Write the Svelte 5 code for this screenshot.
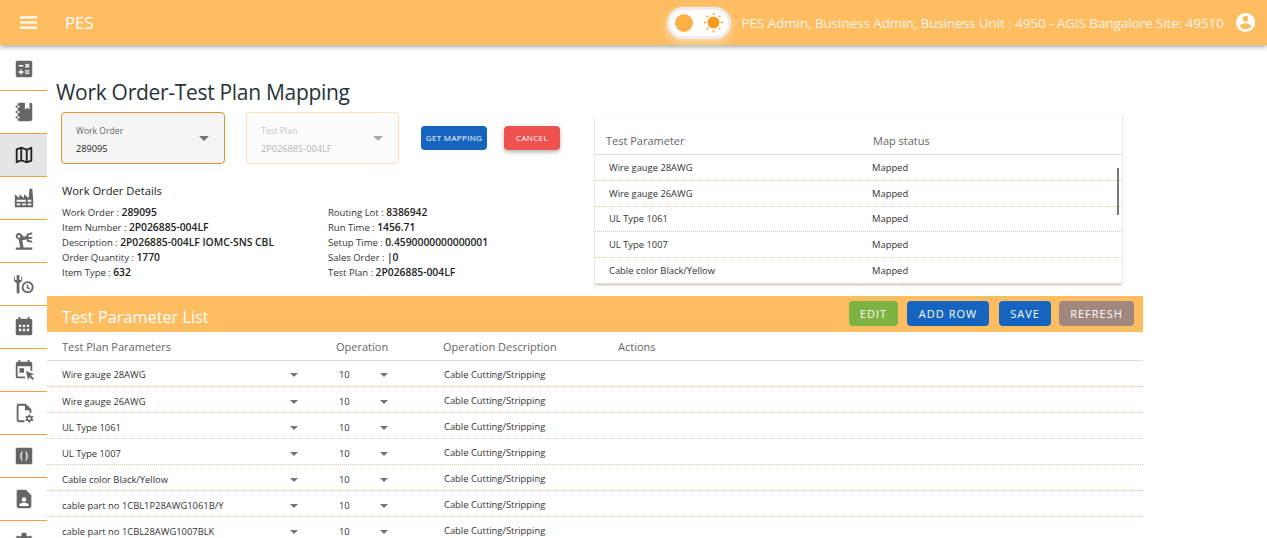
<script>
	const icons = [
		{ d: 'M19,3H5C3.9,3 3,3.9 3,5V19C3,20.1 3.9,21 5,21H19C20.1,21 21,20.1 21,19V5C21,3.9 20.1,3 19,3M13.03,7.06L14.09,6L15.5,7.41L16.91,6L17.97,7.06L16.56,8.47L17.97,9.88L16.91,10.94L15.5,9.54L14.09,10.95L13.03,9.89L14.44,8.47L13.03,7.06M6.25,7.72H11.25V9.22H6.25V7.72M11.5,16H9.5V18H8V16H6V14.5H8V12.5H9.5V14.5H11.5V16M18,17.25H13V15.75H18V17.25M18,14.75H13V13.25H18V14.75Z' },
		{ d: 'M3 7V5H5V4C5 2.89 5.9 2 7 2H13V9L15.5 7.5L18 9V2H19C20.05 2 21 2.95 21 4V20C21 21.05 20.05 22 19 22H7C5.95 22 5 21.05 5 20V19H3V17H5V13H3V11H5V7H3M5 5V7H7V5H5M5 19H7V17H5V19M5 13H7V11H5V13Z' },
		{ d: 'M20.5,3L20.34,3.03L15,5.1L9,3L3.36,4.9C3.15,4.97 3,5.15 3,5.38V20.5A0.5,0.5 0 0,0 3.5,21L3.66,20.97L9,18.9L15,21L20.64,19.1C20.85,19.03 21,18.85 21,18.62V3.5A0.5,0.5 0 0,0 20.5,3M10,5.47L14,6.87V18.53L10,17.13V5.47M5,6.46L8,5.45V17.15L5,18.31V6.46M19,17.54L16,18.55V6.86L19,5.7V17.54Z', active: true },
		{ d: 'M4,18V20H8V18H4M4,14V16H14V14H4M10,18V20H14V18H10M16,14V16H20V14H16M16,18V20H20V18H16M2,22V8L7,12V8L12,12V8L17,12L18,2H21L22,12V22H2Z' },
		{ d: 'M3 19H21V21.5H3ZM8 19L6 10.2A3.5 3.5 0 1 1 9.2 4.6L12 7.5L15 6V4L21 2.5V4.5L17 5.5V7.5H21V9.5H17V11L21 12V14L15 12.5V10L11 11.2L10 10.5L11.5 19ZM6.5 5.5A1.5 1.5 0 1 0 6.5 8.5A1.5 1.5 0 1 0 6.5 5.5Z' },
		{ d: 'M2 3.2A5 5 0 0 0 4 11V22H7V11A5 5 0 0 0 9 3.2V7.5H7V2.5A5 5 0 0 0 4 2.5V7.5H2ZM16 9A6.5 6.5 0 1 0 16 22A6.5 6.5 0 1 0 16 9M16 11A4.5 4.5 0 1 1 16 20A4.5 4.5 0 1 1 16 11M15 12.5V16.3L18 18L18.8 16.7L16.5 15.4V12.5Z' },
		{ d: 'M19,3H18V1H16V3H8V1H6V3H5A2,2 0 0,0 3,5V19A2,2 0 0,0 5,21H19A2,2 0 0,0 21,19V5A2,2 0 0,0 19,3M6.5,9.5H9V12H6.5ZM10.75,9.5H13.25V12H10.75ZM15,9.5H17.5V12H15ZM6.5,14H9V16.5H6.5ZM10.75,14H13.25V16.5H10.75ZM15,14H17.5V16.5H15Z' },
		{ d: 'M19 3H18V1H16V3H8V1H6V3H5A2 2 0 0 0 3 5V19A2 2 0 0 0 5 21H13.5L12.7 19H5V8H19V12.5L21 13.3V5A2 2 0 0 0 19 3M7 10H12V15H7ZM14 13L23 16.5L19.5 18L23 21.5L21.5 23L18 19.5L16.5 23Z' },
		{ d: 'M6 2A2 2 0 0 0 4 4V20A2 2 0 0 0 6 22H12.5V20H6V4H13V9H18V12H20V8L14 2ZM17 13.5L18.6 13.5L18.9 15A4 4 0 0 1 20 15.6L21.4 15L22.2 16.4L21 17.4A4 4 0 0 1 21 18.6L22.2 19.6L21.4 21L20 20.4A4 4 0 0 1 18.9 21L18.6 22.5H17L16.7 21A4 4 0 0 1 15.6 20.4L14.2 21L13.4 19.6L14.6 18.6A4 4 0 0 1 14.6 17.4L13.4 16.4L14.2 15L15.6 15.6A4 4 0 0 1 16.7 15ZM17.8 16.5A1.5 1.5 0 1 0 17.8 19.5A1.5 1.5 0 1 0 17.8 16.5Z' },
		{ d: 'M5 3H19A2 2 0 0 1 21 5V19A2 2 0 0 1 19 21H5A2 2 0 0 1 3 19V5A2 2 0 0 1 5 3M9.5 7C7.5 9.5 7.5 14.5 9.5 17H10.6C9 14.5 9 9.5 10.6 7ZM13.4 7C15 9.5 15 14.5 13.4 17H14.5C16.5 14.5 16.5 9.5 14.5 7Z' },
		{ d: 'M6 2A2 2 0 0 0 4 4V20A2 2 0 0 0 6 22H18A2 2 0 0 0 20 20V8L14 2ZM12 10A2.5 2.5 0 1 1 12 15A2.5 2.5 0 1 1 12 10M7 19.5V18C7 16.5 10 16 12 16C14 16 17 16.5 17 18V19.5Z' },
		{ d: 'M12,8A4,4 0 0,1 16,12A4,4 0 0,1 12,16A4,4 0 0,1 8,12A4,4 0 0,1 12,8M12,10A2,2 0 0,0 10,12A2,2 0 0,0 12,14A2,2 0 0,0 14,12A2,2 0 0,0 12,10M10,22C9.75,22 9.54,21.82 9.5,21.58L9.13,18.93C8.5,18.68 7.96,18.34 7.44,17.94L4.95,18.95C4.73,19.03 4.46,18.95 4.34,18.73L2.34,15.27C2.21,15.05 2.27,14.78 2.46,14.63L4.57,12.97L4.5,12L4.57,11L2.46,9.37C2.27,9.22 2.21,8.95 2.34,8.73L4.34,5.27C4.46,5.05 4.73,4.96 4.95,5.05L7.44,6.05C7.96,5.66 8.5,5.32 9.13,5.07L9.5,2.42C9.54,2.18 9.75,2 10,2H14C14.25,2 14.46,2.18 14.5,2.42L14.87,5.07C15.5,5.32 16.04,5.66 16.56,6.05L19.05,5.05C19.27,4.96 19.54,5.05 19.66,5.27L21.66,8.73C21.79,8.95 21.73,9.22 21.54,9.37L19.43,11L19.5,12L19.43,13L21.54,14.63C21.73,14.78 21.79,15.05 21.66,15.27L19.66,18.73C19.54,18.95 19.27,19.04 19.05,18.95L16.56,17.95C16.04,18.34 15.5,18.68 14.87,18.93L14.5,21.58C14.46,21.82 14.25,22 14,22H10Z' }
	];

	const detailsLeft = [
		['Work Order', '289095'],
		['Item Number', '2P026885-004LF'],
		['Description', '2P026885-004LF IOMC-SNS CBL'],
		['Order Quantity', '1770'],
		['Item Type', '632']
	];
	const detailsRight = [
		['Routing Lot', '8386942'],
		['Run Time', '1456.71'],
		['Setup Time', '0.4590000000000001'],
		['Sales Order', '|0'],
		['Test Plan', '2P026885-004LF']
	];
	const mapped = ['Wire gauge 28AWG', 'Wire gauge 26AWG', 'UL Type 1061', 'UL Type 1007', 'Cable color Black/Yellow'];
	const params = [...mapped, 'cable part no 1CBL1P28AWG1061B/Y', 'cable part no 1CBL28AWG1007BLK'];
</script>

<div class="page">
	<header>
		<svg class="menu" viewBox="0 0 18 13" width="17" height="13"><path d="M0 0H18V2.2H0ZM0 5.4H18V7.6H0ZM0 10.8H18V13H0Z" /></svg>
		<span class="brand">PES</span>
		<div class="toggle">
			<span class="knob"></span>
			<svg viewBox="0 0 24 24" width="21" height="21" class="sun">
				<circle cx="12" cy="12" r="6" />
				<path d="M12 1V3.5M12 20.5V23M1 12H3.5M20.5 12H23M4.2 4.2L5.8 5.8M18.2 18.2L19.8 19.8M19.8 4.2L18.2 5.8M5.8 18.2L4.2 19.8" />
			</svg>
		</div>
		<span class="user">PES Admin, Business Admin, Business Unit : 4950 - AGIS Bangalore Site: 49510</span>
		<svg class="account" viewBox="0 0 24 24" width="23" height="23"><path d="M12,19.2C9.5,19.2 7.29,17.92 6,16C6.03,14 10,12.9 12,12.9C14,12.9 17.97,14 18,16C16.71,17.92 14.5,19.2 12,19.2M12,5A3,3 0 0,1 15,8A3,3 0 0,1 12,11A3,3 0 0,1 9,8A3,3 0 0,1 12,5M12,2A10,10 0 0,0 2,12A10,10 0 0,0 12,22A10,10 0 0,0 22,12A10,10 0 0,0 12,2Z" /></svg>
	</header>

	<div class="body">
		<nav>
			{#each icons as icon}
				<div class="nav-item" class:active={icon.active}>
					<svg viewBox="0 0 24 24" width="22" height="22"><path fill-rule="evenodd" d={icon.d} /></svg>
				</div>
			{/each}
		</nav>

		<main>
			<h1>Work Order-Test Plan Mapping</h1>
			<div class="top">
				<div class="left">
					<div class="filters">
						<div class="select">
							<label>Work Order</label>
							<span class="value">289095</span>
							<i class="arrow"></i>
						</div>
						<div class="select disabled">
							<label>Test Plan</label>
							<span class="value">2P026885-004LF</span>
							<i class="arrow"></i>
						</div>
						<button class="small blue">GET MAPPING</button>
						<button class="small red">CANCEL</button>
					</div>
					<h2>Work Order Details</h2>
					<div class="details">
						<div>
							{#each detailsLeft as [k, v]}
								<p>{k} : <b>{v}</b></p>
							{/each}
						</div>
						<div>
							{#each detailsRight as [k, v]}
								<p>{k} : <b>{v}</b></p>
							{/each}
						</div>
					</div>
				</div>

				<div class="card">
					<div class="card-head">
						<span>Test Parameter</span>
						<span>Map status</span>
					</div>
					{#each mapped as name}
						<div class="card-row">
							<span>{name}</span>
							<span>Mapped</span>
						</div>
					{/each}
					<div class="thumb"></div>
				</div>
			</div>

			<section>
				<div class="bar">
					<span class="bar-title">Test Parameter List</span>
					<div class="actions">
						<button class="green">EDIT</button>
						<button class="blue addrow">ADD ROW</button>
						<button class="blue save">SAVE</button>
						<button class="brown">REFRESH</button>
					</div>
				</div>
				<div class="thead">
					<span class="c1">Test Plan Parameters</span>
					<span class="c2">Operation</span>
					<span class="c3">Operation Description</span>
					<span>Actions</span>
				</div>
				{#each params as name}
					<div class="trow">
						<span class="c1 sel">{name}<i class="arrow"></i></span>
						<span class="c2 sel op">10<i class="arrow"></i></span>
						<span class="c3 desc">Cable Cutting/Stripping</span>
					</div>
				{/each}
			</section>
		</main>
	</div>
</div>

<style>
	:global(body) {
		margin: 0;
		background: #fff;
	}
	.page {
		width: 1267px;
		height: 538px;
		overflow: hidden;
		font-family: 'Open Sans', 'Noto Sans', sans-serif;
		color: #212121;
	}
	header {
		position: relative;
		z-index: 2;
		display: flex;
		align-items: center;
		height: 45px;
		background: #ffbd62;
		box-shadow: 0 2px 5px rgba(0, 0, 0, 0.35);
		color: #fff;
	}
	header svg {
		fill: #fff;
	}
	.menu {
		margin-left: 20px;
	}
	.brand {
		margin-left: 28px;
		font-size: 17px;
		letter-spacing: -0.2px;
	}
	.toggle {
		display: flex;
		align-items: center;
		justify-content: space-between;
		box-sizing: border-box;
		flex: none;
		width: 58px;
		height: 26px;
		margin-left: 577px;
		padding: 0 4px 0 5px;
		background: #fff;
		border-radius: 13px;
		box-shadow: 0 0 0 3px rgba(235, 240, 250, 0.9), 0 3px 9px 3px rgba(255, 255, 255, 0.5);
	}
	.knob {
		width: 18px;
		height: 18px;
		border-radius: 50%;
		background: #fdb147;
	}
	header svg.sun {
		fill: #f59a1d;
		stroke: #f59a1d;
		stroke-width: 1.6;
	}
	.user {
		margin-left: 13px;
		font-size: 13.5px;
		letter-spacing: -0.09px;
		white-space: nowrap;
		opacity: 0.85;
	}
	.account {
		margin-left: auto;
		margin-right: 10px;
	}
	.body {
		display: flex;
	}
	nav {
		flex: none;
		width: 47px;
		padding-top: 3px;
	}
	.nav-item {
		display: flex;
		align-items: center;
		justify-content: center;
		box-sizing: border-box;
		height: 43px;
		border-bottom: 1px solid #e8a33d;
	}
	.nav-item svg {
		fill: #666;
	}
	.nav-item.active {
		background: #e5e5e5;
	}
	.nav-item.active svg {
		fill: #212121;
	}
	main {
		flex: none;
		width: 1096px;
	}
	h1 {
		margin: 0;
		padding: 31px 0 0 9px;
		height: 36px;
		line-height: 32px;
		font-size: 21px;
		letter-spacing: -0.3px;
		font-weight: 400;
		color: #263238;
		white-space: nowrap;
	}
	.top {
		display: flex;
		height: 184px;
	}
	.left {
		width: 548px;
	}
	.filters {
		display: flex;
		align-items: flex-start;
		padding-left: 14px;
	}
	.select {
		position: relative;
		display: flex;
		flex-direction: column;
		box-sizing: border-box;
		width: 164px;
		height: 52px;
		padding: 11px 14px 0;
		background: #f5f5f5;
		border: 1px solid #d9962c;
		border-radius: 4px;
	}
	.select label {
		font-size: 8.6px;
		line-height: 14px;
		color: #666;
	}
	.select .value {
		margin-top: 4px;
		font-size: 9.2px;
		line-height: 14px;
	}
	.select .arrow {
		position: absolute;
		top: 23px;
		right: 15px;
		border-top-color: #757575;
	}
	.select.disabled {
		width: 153px;
		margin-left: 21px;
		background: #fcfcfc;
		border-color: #f6e0bd;
		color: #b5b5b5;
	}
	.select.disabled label {
		color: #c4c4c4;
	}
	.select.disabled .arrow {
		border-top-color: #a8a8a8;
		right: 15px;
	}
	.arrow {
		display: inline-block;
		width: 0;
		height: 0;
		border-left: 5px solid transparent;
		border-right: 5px solid transparent;
		border-top: 5px solid #757575;
	}
	button {
		border: none;
		border-radius: 4px;
		color: #fff;
		font-family: inherit;
		font-size: 11px;
		letter-spacing: 1px;
		padding: 0;
		height: 25px;
	}
	button.small {
		margin-top: 14px;
		height: 24px;
		padding-bottom: 1px;
		font-size: 8px;
		letter-spacing: 0.35px;
	}
	button.small.blue {
		width: 66px;
		margin-left: 22px;
	}
	button.small.red {
		width: 56px;
		margin-left: 17px;
		background: #ef5350;
		box-shadow: 0 2px 4px rgba(0, 0, 0, 0.3);
	}
	.blue {
		background: #1565c0;
	}
	.green {
		background: #7cb342;
		width: 49px;
	}
	.brown {
		background: #a1887f;
		width: 75px;
	}
	h2 {
		margin: 19px 0 0 15px;
		font-size: 11.2px;
		line-height: 16px;
		font-weight: 400;
	}
	.details {
		display: flex;
		margin: 6px 0 0 15px;
	}
	.details > div {
		width: 266px;
	}
	.details p {
		margin: 0;
		font-size: 9.5px;
		line-height: 15px;
		white-space: nowrap;
		color: #333;
	}
	.details b {
		font-size: 10.3px;
		font-weight: 600;
		color: #212121;
	}
	.card {
		position: relative;
		box-sizing: border-box;
		width: 527px;
		height: 169px;
		margin-top: 3px;
		box-shadow: 0 1px 2px rgba(0, 0, 0, 0.28);
		overflow: hidden;
	}
	.card-head {
		display: flex;
		align-items: flex-end;
		height: 40px;
		padding: 0 0 5px 11px;
		box-sizing: border-box;
		border-bottom: 1px solid #ddd;
		font-size: 11px;
		line-height: 16px;
		color: #666;
	}
	.card-head span:first-child {
		width: 267px;
	}
	.card-row {
		display: flex;
		align-items: center;
		box-sizing: border-box;
		height: 25.8px;
		padding-left: 14px;
		border-bottom: 1px dotted #dccaa6;
		font-size: 9.4px;
		color: #333;
	}
	.card-row span:first-child {
		width: 263px;
	}
	.thumb {
		position: absolute;
		top: 53px;
		right: 3px;
		width: 2px;
		height: 47px;
		background: #777;
	}
	.bar {
		display: flex;
		align-items: center;
		justify-content: space-between;
		height: 36px;
		padding: 0 9px 0 15px;
		background: #ffbd62;
		color: #fff;
	}
	.bar-title {
		font-size: 16.3px;
		padding-top: 6px;
	}
	.actions {
		display: flex;
		gap: 9px;
		margin-top: -1px;
	}
	.addrow {
		width: 82px;
	}
	.save {
		width: 52px;
		margin-left: 1px;
		margin-right: -1px;
	}
	.thead {
		display: flex;
		align-items: center;
		height: 29px;
		box-sizing: border-box;
		border-bottom: 1px solid #ddd;
		font-size: 11px;
		color: #666;
	}
	.trow {
		display: flex;
		align-items: center;
		box-sizing: border-box;
		height: 26px;
		padding-top: 2px;
		border-bottom: 1px dotted #dccaa6;
		font-size: 9.4px;
		color: #333;
	}
	.c1 {
		box-sizing: border-box;
		width: 289px;
		padding-left: 15px;
	}
	.c2 {
		box-sizing: border-box;
		width: 107px;
	}
	.c3 {
		width: 175px;
	}
	.sel {
		display: flex;
		justify-content: space-between;
		align-items: center;
	}
	.trow + .trow .sel {
		padding-top: 2px;
	}
	.sel .arrow {
		border-left-width: 4.5px;
		border-right-width: 4.5px;
		border-top-width: 4.5px;
	}
	.trow .c1 {
		padding-right: 38px;
	}
	.op {
		padding-left: 3px;
		padding-right: 55px;
	}
	.desc {
		padding-left: 1px;
	}
</style>
